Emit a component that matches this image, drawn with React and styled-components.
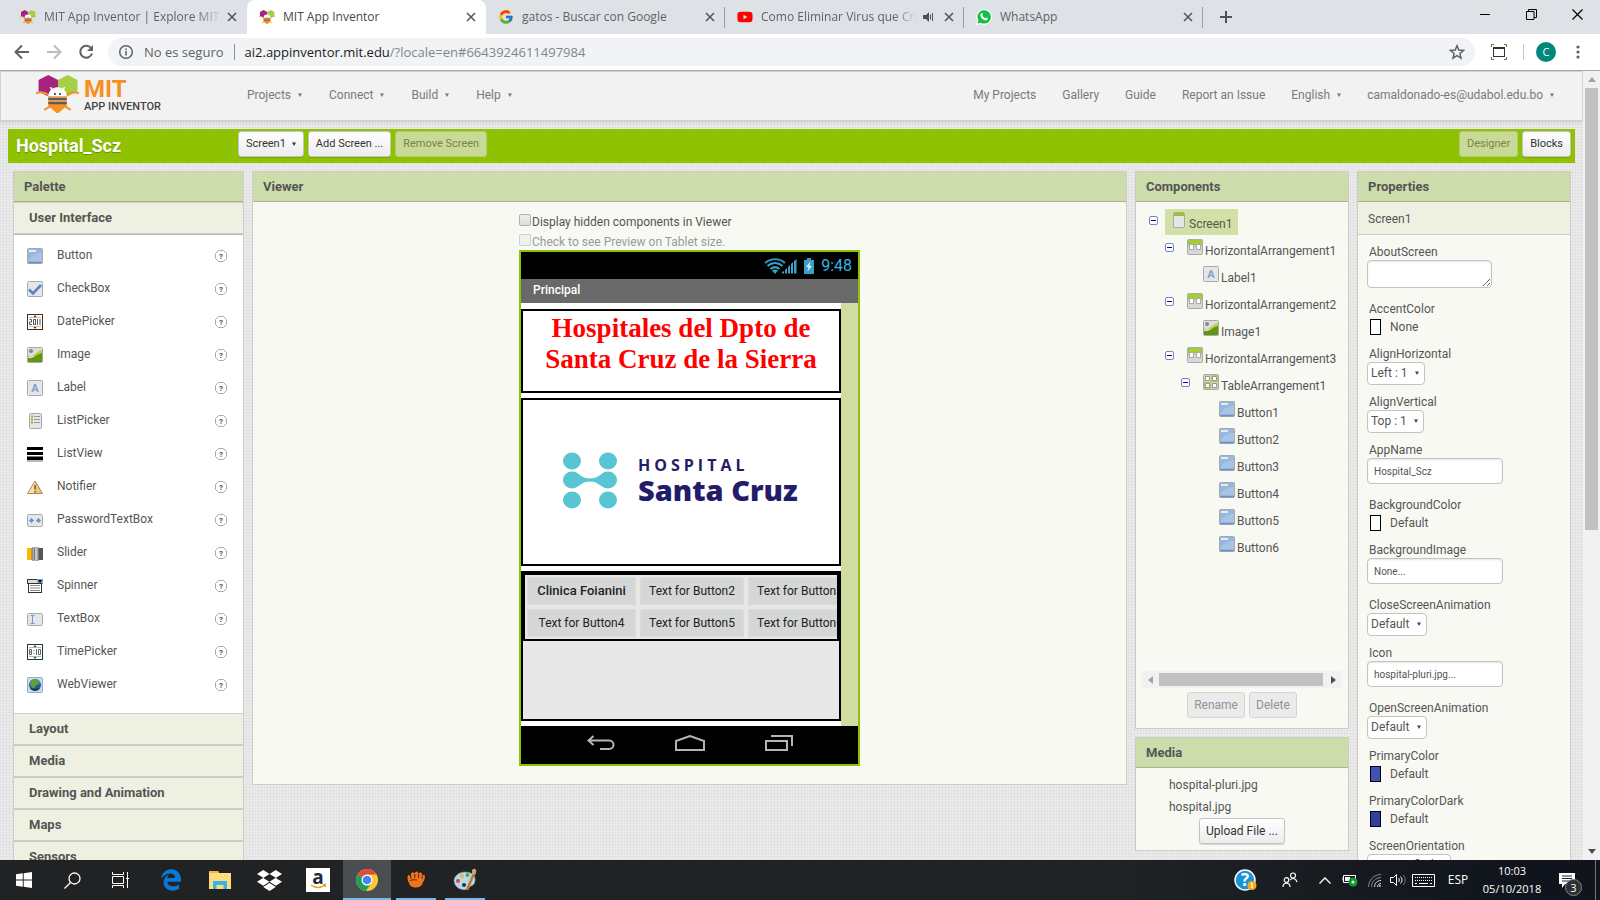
import React from "react";
import styled, { createGlobalStyle, css } from "styled-components";
import { FaDropbox, FaEdgeLegacy, FaYoutube } from "react-icons/fa";
import { FcGoogle } from "react-icons/fc";

const GlobalStyle = createGlobalStyle`
  * { box-sizing: border-box; }
  body { margin: 0; font-family: Roboto, "Liberation Sans", sans-serif; font-size: 12px; line-height: 16px; color: #555; }
  button, input, select, textarea { font: inherit; color: inherit; margin: 0; }
  h1, h2, h3, p, ul { margin: 0; padding: 0; }
  ul { list-style: none; }
  a { color: inherit; text-decoration: none; }
  svg { display: block; flex: none; }
`;

const uiFont = css`font-family: "Open Sans", "Noto Sans", sans-serif;`;

const Desktop = styled.div`
  height: 100vh;
  display: flex;
  flex-direction: column;
  overflow: hidden;
`;

const PlainButton = styled.button`
  border: 0;
  padding: 0;
  background: none;
  display: flex;
  align-items: center;
  justify-content: center;
`;

/* ---------- browser ---------- */

const TabStrip = styled.div`
  ${uiFont}
  flex: none;
  height: 34px;
  background: #dee1e6;
  display: flex;
  padding-left: 8px;
`;

const Tab = styled.div`
  flex: 0 1 239px;
  min-width: 0;
  height: 34px;
  display: flex;
  align-items: center;
  padding: 0 9px 0 12px;
  color: ${(p) => (p.$active ? "#45494d" : "#5f6368")};
  background: ${(p) => (p.$active ? "#fff" : "transparent")};
  border-radius: 8px 8px 0 0;
`;

const TabTitle = styled.span`
  flex: 1;
  min-width: 0;
  margin: 0 4px 0 8px;
  white-space: nowrap;
  overflow: hidden;
  ${(p) => p.$fade && css`mask-image: linear-gradient(90deg, #000 85%, transparent);`}
`;

const TabLine = styled.div`
  width: 1px;
  height: 21px;
  margin: 7px 0 0 -1px;
  background: #9a9da1;
`;

const NewTab = styled(PlainButton)`width: 46px; height: 34px;`;
const WindowControls = styled.div`margin-left: auto; display: flex;`;
const WindowButton = styled(PlainButton)`width: 46px; height: 28px;`;

const Toolbar = styled.div`
  ${uiFont}
  flex: none;
  height: 37px;
  background: #fff;
  border-bottom: 1px solid #a9a9a9;
  display: flex;
  align-items: center;
  padding: 0 12px 0 6px;
`;

const NavButton = styled(PlainButton)`width: 32px; height: 28px;`;

const Omnibox = styled.div`
  flex: 1;
  height: 28px;
  margin-left: 6px;
  padding: 0 10px;
  border-radius: 14px;
  background: #f1f3f4;
  display: flex;
  align-items: center;
  gap: 10px;
  font-size: 13px;
  color: #5f6368;
`;

const OmniLine = styled.div`width: 1px; height: 16px; background: #8a8d91;`;
const Address = styled.div`flex: 1; color: #80868b; b { font-weight: 400; color: #202124; }`;

const Extension = styled(PlainButton)`width: 48px; height: 28px;`;
const ToolLine = styled.div`width: 1px; height: 16px; background: #c6c8cb;`;
const Avatar = styled(PlainButton)`
  width: 20px;
  height: 20px;
  margin: 0 12px;
  border-radius: 50%;
  background: #00897b;
  color: #fff;
  font-size: 11px;
`;
const MoreButton = styled(PlainButton)`width: 20px; height: 28px;`;

/* ---------- page frame ---------- */

const Viewport = styled.div`
  flex: 1;
  min-height: 0;
  display: flex;
`;

const Page = styled.div`
  flex: 1;
  min-width: 0;
  overflow: hidden;
  background-color: #ebebeb;
  background-image:
    repeating-linear-gradient(90deg, rgba(0, 0, 0, 0.03) 0 1px, transparent 1px 3px),
    repeating-linear-gradient(0deg, rgba(0, 0, 0, 0.03) 0 1px, transparent 1px 3px);
`;

const ScrollTrack = styled.div`
  flex: none;
  width: 17px;
  background: #f1f1f1;
  display: flex;
  flex-direction: column;
  align-items: center;
  justify-content: space-between;
`;
const ScrollEnd = styled(PlainButton)`width: 17px; height: 17px;`;
const ScrollThumb = styled.div`width: 13px; flex: 0 0 56%; background: #c1c1c1; margin-bottom: auto;`;

const Header = styled.header`
  height: 50px;
  border: 1px solid #d2d2d2;
  background: #f2f2f2;
  box-shadow: 0 1px 4px rgba(0, 0, 0, 0.12);
  display: flex;
  align-items: center;
  color: #7a7a7a;
  padding: 0 28px 0 35px;
`;

const Brand = styled.a`
  width: 211px;
  display: flex;
  gap: 5px;
  padding-bottom: 4px;
`;
const BrandText = styled.span`
  display: flex;
  flex-direction: column;
  padding-top: 3px;
  b { font-size: 24px; line-height: 22px; font-weight: 700; color: #f7901e; }
  span { font-size: 11px; line-height: 14px; font-weight: 500; color: #444; }
`;

const Menu = styled.nav`
  display: flex;
  gap: 27px;
  padding-bottom: 2px;
`;
const MenuRight = styled(Menu)`margin-left: auto; gap: 26px;`;
const MenuButton = styled(PlainButton)`gap: 7px;`;

const ProjectBar = styled.div`
  height: 34px;
  margin: 8px 8px 0;
  padding: 0 4px 6px 8px;
  background: #8fc202;
  display: flex;
  align-items: flex-end;
  gap: 4px;
`;
const ProjectName = styled.h1`
  width: 218px;
  font-size: 18px;
  line-height: 22px;
  font-weight: 700;
  color: #fff;
  text-shadow: 0 1px 1px rgba(0, 0, 0, 0.25);
`;
const Spacer = styled.div`flex: 1;`;

const PushButton = styled.button`
  height: 26px;
  padding: 0 ${(p) => (p.$small ? 7 : 6)}px;
  border: 1px solid #c4c4c4;
  border-radius: 3px;
  background: linear-gradient(#fff, #ececec);
  box-shadow: 0 1px 1px rgba(0, 0, 0, 0.15);
  color: #333;
  font-size: ${(p) => (p.$small ? 11 : 12)}px;
  white-space: nowrap;
  display: flex;
  align-items: center;
  gap: 6px;
  &:disabled {
    background: ${(p) => (p.$onGreen ? "#c9da98" : "#ebebeb")};
    border-color: ${(p) => (p.$onGreen ? "#b5cc74" : "#d5d5d5")};
    color: ${(p) => (p.$onGreen ? "#76854a" : "#929292")};
    box-shadow: none;
  }
`;

const Workspace = styled.main`
  display: flex;
  align-items: flex-start;
  gap: 8px;
  padding: 8px 12px 0 13px;
`;

const Panel = styled.section`
  width: ${(p) => p.$width};
  flex: ${(p) => (p.$grow ? "1 1 0" : "none")};
  min-width: 0;
  border: 1px solid #ccc;
  background: #f8f9f3;
`;
const PanelTitle = styled.h2`
  height: 30px;
  padding: 0 10px;
  border-bottom: 1px solid #aab38f;
  background: #ccdcab;
  font-size: 13px;
  line-height: 30px;
  font-weight: 700;
  color: #555;
`;

/* ---------- palette ---------- */

const Category = styled.button`
  display: block;
  width: 100%;
  height: 32px;
  padding: 0 15px;
  border: 1px solid #ccc;
  border-width: 1px 0;
  background: #eef1e1;
  text-align: left;
  font-size: 13px;
  font-weight: 700;
  color: #555;
`;
const PaletteList = styled.ul`
  height: 479px;
  padding: 4px 16px 10px 13px;
  border-top: 1px solid #b9b9b9;
  background: #fff;
`;
const PaletteItem = styled.li`
  height: 33px;
  display: flex;
  align-items: center;
  gap: 14px;
  span { flex: 1; padding-bottom: 2px; }
`;

/* ---------- viewer ---------- */

const ViewerBody = styled.div`
  height: 582px;
  padding-top: 12px;
  display: flex;
  flex-direction: column;
  align-items: center;
`;
const PhoneColumn = styled.div`width: 341px;`;
const CheckRow = styled.label`
  height: 20px;
  display: flex;
  align-items: flex-start;
  color: ${(p) => (p.$off ? "#999" : "#555")};
`;
const CheckInput = styled.input`
  appearance: none;
  width: 12px;
  height: 12px;
  border: 1px solid #b0b0b0;
  border-radius: 2px;
  background: linear-gradient(#eee, #ddd);
  &:disabled { border-color: #d0d0d0; background: #f0f0f0; }
`;
const CheckText = styled.span`padding-left: 1px;`;

const Phone = styled.div`
  border: 2px solid #8fc202;
  background: #d0dda2;
  margin-top: -4px;
`;
const PhoneStatus = styled.div`
  height: 27px;
  padding-right: 6px;
  background: #000;
  color: #33b5e5;
  font-size: 16px;
  display: flex;
  align-items: center;
  justify-content: flex-end;
  gap: 6px;
`;
const PhoneTitle = styled.div`
  height: 24px;
  padding: 0 12px;
  background: #696969;
  color: #fff;
  font-weight: 500;
  line-height: 22px;
`;
const PhoneForm = styled.div`
  width: 320px;
  height: 423px;
  padding: 6px 0 5px;
  background: #fff;
  display: flex;
  flex-direction: column;
  gap: 5px;
`;
const Arrangement = styled.div`
  height: ${(p) => p.$height}px;
  border: 2px solid #000;
  background: ${(p) => (p.$gray ? "#e7e7e7" : "#fff")};
  overflow: hidden;
`;
const BigLabel = styled.p`
  padding-top: 2px;
  text-align: center;
  font-family: "Liberation Serif", serif;
  font-size: 27px;
  line-height: 31px;
  font-weight: 700;
  color: #f00;
`;
const HospitalLogo = styled.div`
  height: 100%;
  padding: 0 0 2px 39px;
  display: flex;
  align-items: center;
  gap: 20px;
  font-family: "Open Sans", "Noto Sans", sans-serif;
  color: #231c68;
`;
const LogoWords = styled.div`display: flex; flex-direction: column;`;
const LogoSmall = styled.span`
  font-size: 16px;
  line-height: 18px;
  font-weight: 700;
  letter-spacing: 4px;
`;
const LogoLarge = styled.span`font-size: 29px; line-height: 32px; font-weight: 800; white-space: nowrap;`;

const TableArrangement = styled.div`
  height: 68px;
  padding: 2px;
  border: 2px solid #000;
  overflow: hidden;
  display: grid;
  grid-template-columns: 109px 104px 104px;
  gap: 4px;
`;
const AppButton = styled.button`
  height: 28px;
  padding: 0;
  border: 1px solid #dcdcdc;
  background: #d5d6d6;
  color: #222;
  font-size: ${(p) => (p.$bold ? 13 : 12)}px;
  font-weight: ${(p) => (p.$bold ? 500 : 400)};
  white-space: nowrap;
`;
const PhoneNav = styled.div`
  height: 38px;
  background: #000;
  display: flex;
  justify-content: center;
  align-items: center;
  gap: 60px;
  padding-bottom: 4px;
`;

/* ---------- components tree ---------- */

const Side = styled.div`width: 214px; display: flex; flex-direction: column; gap: 8px;`;
const Tree = styled.ul`height: 469px; padding: 7px 0 0 13px; overflow: hidden;`;
const TreeRow = styled.li`
  height: 27px;
  display: flex;
  padding-left: ${(p) => p.$level * 16}px;
`;
const Toggle = styled(PlainButton)`width: 16px; height: 16px; justify-content: flex-start; align-items: flex-end;`;
const TreeNode = styled.span`
  height: 26px;
  display: flex;
  gap: 2px;
  padding: 3px 6px 0;
  white-space: nowrap;
  background: ${(p) => (p.$selected ? "#d2e0a6" : "none")};
  b { font-weight: 400; line-height: 24px; }
`;
const HScroll = styled.div`
  height: 17px;
  margin: 0 6px;
  background: #f1f1f1;
  display: flex;
  align-items: center;
`;
const HThumb = styled.div`width: 82%; height: 13px; background: #c1c1c1;`;
const ButtonRow = styled.div`
  display: flex;
  justify-content: center;
  gap: 4px;
  padding: ${(p) => p.$pad};
`;
const MediaItem = styled.a`display: block; padding: 3px 33px; line-height: 16px;`;
const MediaList = styled.div`padding-top: 6px;`;

/* ---------- properties ---------- */

const Target = styled.p`
  height: 33px;
  padding: 0 10px;
  border-bottom: 1px solid #ccc;
  background: #eef1e1;
  line-height: 34px;
`;
const PropertyList = styled.div`padding: 9px 9px 20px;`;
const Property = styled.div`margin-bottom: ${(p) => (p.$wide ? 13 : 9)}px;`;
const PropertyName = styled.label`display: block; padding-left: 2px;`;
const fieldBox = css`
  display: block;
  border: 1px solid #c3c3c3;
  border-radius: 4px;
  background: #fff;
  outline: 0;
`;
const TextField = styled.input`
  ${fieldBox}
  width: 136px;
  height: 26px;
  padding: 0 6px;
  font-size: 10px;
  box-shadow: inset 0 1px 2px rgba(0, 0, 0, 0.1);
`;
const TextArea = styled.textarea`
  ${fieldBox}
  width: 125px;
  height: 28px;
  resize: both;
  box-shadow: inset 0 1px 2px rgba(0, 0, 0, 0.1);
`;
const SelectWrap = styled.div`
  width: max-content;
  position: relative;
  svg { position: absolute; right: 6px; top: 9px; pointer-events: none; }
`;
const Select = styled.select`
  ${fieldBox}
  appearance: none;
  height: 23px;
  padding: 0 16px 2px 3px;
`;
const ColorRow = styled.button`
  height: 20px;
  padding: 0 0 0 3px;
  border: 0;
  background: none;
  display: flex;
  align-items: center;
  gap: 9px;
`;
const Swatch = styled.span`
  width: 11px;
  height: 16px;
  border: 1px solid #000;
  background: ${(p) => p.$color};
`;

/* ---------- taskbar ---------- */

const Taskbar = styled.footer`
  ${uiFont}
  flex: none;
  height: 40px;
  background: linear-gradient(90deg, #202224 70%, #10151d 95%);
  color: #fff;
  display: flex;
`;
const TaskButton = styled(PlainButton)`
  width: 48px;
  height: 40px;
  margin-right: ${(p) => (p.$app ? 1 : 0)}px;
  background: ${(p) => (p.$active ? "#4b4e50" : "none")};
  position: relative;
  &::after {
    content: "";
    position: absolute;
    bottom: 0;
    left: ${(p) => (p.$active ? 0 : 4)}px;
    right: ${(p) => (p.$active ? 0 : 4)}px;
    height: 2px;
    background: ${(p) => (p.$open ? "#76b9ed" : "transparent")};
  }
`;
const TaskGap = styled.div`width: 3px;`;
const Tray = styled.div`
  margin-left: auto;
  display: flex;
  align-items: center;
`;
const TrayButton = styled(PlainButton)`width: ${(p) => p.$w}px; height: 40px; color: #fff;`;
const Language = styled(PlainButton)`width: 42px; color: #fff;`;
const Clock = styled.div`
  width: 66px;
  text-align: center;
  font-size: 11px;
  line-height: 18px;
`;
const Notify = styled(PlainButton)`
  width: 50px;
  height: 40px;
  padding-right: 6px;
  position: relative;
`;
const Badge = styled.span`
  position: absolute;
  right: 13px;
  bottom: 4px;
  width: 17px;
  height: 17px;
  border: 1px solid #888;
  border-radius: 50%;
  background: #2c2f33;
  color: #fff;
  font-size: 11px;
  line-height: 15px;
`;
const ShowDesktop = styled.div`width: 5px; height: 40px; border-left: 1px solid #777;`;

/* ---------- drawings ---------- */

const Caret = ({ color = "#777" }) => (
  <svg width="4" height="4" viewBox="0 0 4 4"><path d="M0 .5h4L2 4z" fill={color} /></svg>
);

const CloseX = () => (
  <PlainButton aria-label="Close tab">
    <svg width="12" height="12" viewBox="0 0 12 12"><path d="M2 2l8 8M10 2l-8 8" stroke="#4f5357" strokeWidth="1.500" /></svg>
  </PlainButton>
);

const Bee = ({ size = 16 }) => (
  <svg width={size} height={size * 38 / 42} viewBox="0 0 42 38">
    <path d="M2.500 5L12 0l9.500 5v12L12 21l-9.500-5z" fill="#a5237c" />
    <path d="M21.500 5L31 0l9.500 5v11L31 21l-9.500-4z" fill="#a5cf47" />
    <path d="M0 18c4-2 9-1 13 2M42 18c-4-2-9-1-13 2M8 34l7-4M34 34l-7-4" stroke="#f7901e" strokeWidth="2" fill="none" />
    <path d="M12 21c0-12 18-12 18 0z" fill="#fff" />
    <path d="M14 12l3 4M28 12l-3 4" stroke="#fff" strokeWidth="1.500" />
    <circle cx="18.500" cy="18.500" r="1" fill="#222" /><circle cx="23.500" cy="18.500" r="1" fill="#222" />
    <path d="M12 21h18v9l-9 8-9-8z" fill="#f7901e" />
    <path d="M12 23.500h18M12 27.500h18" stroke="#5b5b5d" strokeWidth="2" />
    <path d="M12 21.500h18M12 25.500h18" stroke="#cf9f7a" strokeWidth="1" />
  </svg>
);

const WhatsAppMark = () => (
  <svg width="16" height="16" viewBox="0 0 16 16">
    <path d="M0 16l1.200-4.200A7.800 7.800 0 1 1 4.400 15z" fill="#fff" />
    <path d="M1.500 14.500l.9-3.200A6.700 6.700 0 1 1 4.800 13.700z" fill="#12c143" />
    <path d="M5.300 4.300c.7-.6 1.200-.2 1.400.5.300.8.400 1-.3 1.800.6 1.200 1.500 2.100 2.800 2.700.7-.9.900-1 1.600-.6 1 .5 1.300.7 1 1.400-.5 1.400-2 1.600-3.500 1C6 10.200 4.700 8.500 4.400 6.800c-.1-1 .2-2 .9-2.500z" fill="#fff" />
  </svg>
);

const HelpMark = () => (
  <PlainButton aria-label="Help">
    <svg width="12" height="12" viewBox="0 0 12 12">
      <path d="M3.500 .5h5l3 3v5l-3 3h-5l-3-3v-5z" fill="#fff" stroke="#aaa" />
      <text x="6" y="9" fontSize="8" fontWeight="700" textAnchor="middle" fill="#555" fontFamily="Roboto">?</text>
    </svg>
  </PlainButton>
);

const Frame = ({ fill = "#e4e6e8", y = 0.5, h = 15, x = 0.5, w = 15, stroke = "#a9a9a9" }) => (
  <rect x={x} y={y} width={w} height={h} rx="1" fill={fill} stroke={stroke} />
);

const drawings = {
  Button: <><Frame fill="#a9c3e5" /><path d="M1 1h14v4C9 5 4 8 1 13z" fill="#98b7df" /><path d="M2 2h7v2H2z" fill="#e3edf9" /><path d="M1 14.500h14" stroke="#6b8fc7" strokeWidth="1.500" /></>,
  CheckBox: <><Frame /><path d="M2 8.500l4 4L14 4" fill="none" stroke="#5583c9" strokeWidth="2.600" /></>,
  DatePicker: <><rect x=".5" y=".5" width="15" height="15" fill="#fff" stroke="#333" /><path d="M2 3.500h12M2 12.500h12" stroke="#f0b27a" /><path d="M6.500 3L8 1l1.500 2zM6.500 13L8 15l1.500-2z" fill="#333" /><path d="M2.500 5.500h2v2.500h-2v2.500h2.500M6.500 5.500h2v5h-2zM10.500 5v6M13 5v6" fill="none" stroke="#555" /></>,
  Image: <><Frame fill="#ddd" /><circle cx="4" cy="4" r="2" fill="#888" /><path d="M1 10c6 0 8-6 14-7v6H1z" fill="#b3d447" /><path d="M1 11c6 1 8-4 14-5v9H1z" fill="#65960f" /></>,
  Label: <><Frame /><text x="8" y="12" fontSize="11" fontWeight="700" textAnchor="middle" fill="#7da0d6" fontFamily="Roboto">A</text></>,
  ListPicker: <><Frame x={2.5} w={12} /><path d="M4 3.500h2M4 6.500h2M4 9.500h2" stroke="#8db53a" strokeWidth="2" /><path d="M7 3.500h6M7 6.500h6M7 9.500h6" stroke="#999" /></>,
  ListView: <><path d="M0 2.500h16M0 7.500h16M0 12.500h16" stroke="#000" strokeWidth="3" /><path d="M0 10.500h16M0 15h16" stroke="#777" strokeWidth="1" /></>,
  Notifier: <><path d="M8 2l7.500 12.500H.5z" fill="#f5c368" stroke="#9a8b70" /><path d="M8 3v11H1.500z" fill="#fbe0a4" /><path d="M8 6v4.500M8 12v1.500" stroke="#765220" strokeWidth="1.500" /></>,
  PasswordTextBox: <><Frame y={2.5} h={12} /><path d="M4.500 6v5M2 8.500h5M3 7l3 3M6 7l-3 3M11.500 6v5M9 8.500h5M10 7l3 3M13 7l-3 3" stroke="#6e96d4" /></>,
  Slider: <><rect y="3" width="5" height="12" fill="#fab900" /><rect x="5" y="2" width="7" height="14" fill="#aaa" /><path d="M5 3v12M7.500 3v12M11.500 3v12" stroke="#777" /><path d="M9 3v12" stroke="#ddd" /><rect x="12" y="3" width="4" height="12" fill="#555" /></>,
  Spinner: <><rect x=".5" y="1.500" width="15" height="4" fill="#ddd" stroke="#334" /><rect x="10" y="1" width="6" height="5" fill="#7ea2d9" /><path d="M11 2h4l-2 3z" fill="#000" /><rect x="1.500" y="5.500" width="13" height="9" fill="#fff" stroke="#333" /><path d="M3 7.500h10M3 10h10M3 12.500h10" stroke="#888" /></>,
  TextBox: <><Frame y={2.5} h={12} /><path d="M3.500 4.500h4M3.500 12.500h4M5.500 4.500v8" stroke="#7c99c9" /></>,
  TimePicker: <><rect x=".5" y=".5" width="15" height="15" fill="#fff" stroke="#333" /><path d="M2 3.500h12M2 12.500h12" stroke="#8ec3dc" /><path d="M6.500 3L8 1l1.500 2zM6.500 13L8 15l1.500-2z" fill="#333" /><path d="M2.500 5.500h2v5h-2zM2.500 8h2M9.500 5v6M11.500 5.500h2v5h-2zM7 6v1M7 9v1" fill="none" stroke="#666" /></>,
  WebViewer: <><Frame fill="#c6daf3" stroke="#91abd2" /><circle cx="8" cy="8" r="6" fill="#265a9c" /><path d="M3 6c2-5 8-5 10-1-1 4-4 2-5 5s-5 0-5-4z" fill="#58a23c" /><path d="M3 11c3 4 8 3 10 0-3 1-7 1-10 0z" fill="#173a30" /></>,
  Screen: <><Frame x={2.5} w={11} /><rect x="3" y="1" width="10" height="3" fill="#9cc22e" /></>,
  Horizontal: <><Frame fill="#d8d8d8" /><rect x="1" y="1" width="14" height="5" fill="#a6cc3c" /><path d="M1 6h14v2H1z" fill="#c0d884" /><rect x="2.500" y="5.500" width="4" height="5" fill="#fff" stroke="#aaa" /><rect x="9.500" y="5.500" width="4" height="5" fill="#fff" stroke="#aaa" /></>,
  Table: <><Frame fill="#b0cd62" /><path d="M1 1h7v7H1zM8 8h7v7H8z" fill="#ccd2bd" /><path d="M2.500 2.500h4v4h-4zM9.500 2.500h4v4h-4zM2.500 9.500h4v4h-4zM9.500 9.500h4v4h-4z" fill="#fff" stroke="#999" /></>,
};

const Glyph = ({ name }) => <svg width="16" height="16" viewBox="0 0 16 16">{drawings[name]}</svg>;

const Minus = () => (
  <svg width="9" height="9" viewBox="0 0 9 9"><rect x=".5" y=".5" width="8" height="8" rx="1.500" fill="#fff" stroke="#7686c2" /><path d="M2 4.500h5" stroke="#0000b0" /></svg>
);

const HospitalMark = () => (
  <svg width="56" height="58" viewBox="0 0 56 58" fill="#57c5d2">
    {[10, 46].map((x) => [9, 28, 48].map((y) => <ellipse key={`${x}-${y}`} cx={x} cy={y} rx="9" ry="8.500" />))}
    <path d="M13 20c6 3 8 6.500 15 6.500S37 23 43 20v16c-6-3-8-6.500-15-6.500S19 33 13 36z" />
  </svg>
);

const ChromeLogo = () => (
  <svg width="24" height="24" viewBox="0 0 24 24">
    <circle cx="12" cy="12" r="11" fill="#fbc933" />
    <path d="M12 12L2.500 6.500A11 11 0 0 1 21.500 6.500H12z" fill="#dd4b3e" />
    <path d="M12 12L2.500 6.500A11 11 0 0 0 11 23l5.500-8.500z" fill="#1fa05a" />
    <circle cx="12" cy="12" r="5.500" fill="#fff" /><circle cx="12" cy="12" r="4.300" fill="#4285f4" />
  </svg>
);

/* ---------- data ---------- */

const tabs = [
  { title: "MIT App Inventor | Explore MIT App Inventor", icon: <Bee />, fade: true },
  { title: "MIT App Inventor", icon: <Bee />, active: true },
  { title: "gatos - Buscar con Google", icon: <FcGoogle size={16} />, line: true },
  { title: "Como Eliminar Virus que Crean Acceso", icon: <FaYoutube size={16} color="#f00" />, line: true, fade: true, sound: true },
  { title: "WhatsApp", icon: <WhatsAppMark />, line: true },
];

const paletteItems = ["Button", "CheckBox", "DatePicker", "Image", "Label", "ListPicker", "ListView", "Notifier", "PasswordTextBox", "Slider", "Spinner", "TextBox", "TimePicker", "WebViewer"];
const categories = ["Layout", "Media", "Drawing and Animation", "Maps", "Sensors"];

const tree = [
  [0, "Screen", "Screen1", true],
  [1, "Horizontal", "HorizontalArrangement1", true],
  [2, "Label", "Label1"],
  [1, "Horizontal", "HorizontalArrangement2", true],
  [2, "Image", "Image1"],
  [1, "Horizontal", "HorizontalArrangement3", true],
  [2, "Table", "TableArrangement1", true],
  ...[1, 2, 3, 4, 5, 6].map((n) => [3, "Button", `Button${n}`]),
];

const properties = [
  ["AboutScreen", "area", ""],
  ["AccentColor", "color", "None", "#fff"],
  ["AlignHorizontal", "select", "Left : 1"],
  ["AlignVertical", "select", "Top : 1"],
  ["AppName", "text", "Hospital_Scz"],
  ["BackgroundColor", "color", "Default", "#fff"],
  ["BackgroundImage", "text", "None..."],
  ["CloseScreenAnimation", "select", "Default"],
  ["Icon", "text", "hospital-pluri.jpg..."],
  ["OpenScreenAnimation", "select", "Default"],
  ["PrimaryColor", "color", "Default", "#3f51b5"],
  ["PrimaryColorDark", "color", "Default", "#303f9f"],
  ["ScreenOrientation", "select", "Unspecified"],
];

const PropertyControl = ({ id, kind, value, color }) => {
  if (kind === "area") return <TextArea id={id} defaultValue={value} />;
  if (kind === "text") return <TextField id={id} defaultValue={value} />;
  if (kind === "color") return <ColorRow id={id}><Swatch $color={color} />{value}</ColorRow>;
  return (
    <SelectWrap>
      <Select id={id}><option>{value}</option></Select>
      <Caret color="#444" />
    </SelectWrap>
  );
};

/* ---------- sections ---------- */

const Browser = () => (
  <>
    <TabStrip>
      {tabs.map((t) => (
        <React.Fragment key={t.title}>
          <Tab $active={t.active}>
            {t.icon}
            <TabTitle $fade={t.fade}>{t.title}</TabTitle>
            {t.sound && (
              <svg width="22" height="12" viewBox="0 0 22 12"><path d="M2 4h3l3-3v10L5 8H2z" fill="#4f5357" /><path d="M9.500 3.500v5M11.500 2v8" stroke="#4f5357" /></svg>
            )}
            <CloseX />
          </Tab>
          {t.line && <TabLine />}
        </React.Fragment>
      ))}
      <NewTab aria-label="New tab"><svg width="12" height="12" viewBox="0 0 12 12"><path d="M6 0v12M0 6h12" stroke="#4f5357" strokeWidth="2" /></svg></NewTab>
      <WindowControls>
        <WindowButton aria-label="Minimize"><svg width="10" height="10" viewBox="0 0 10 10"><path d="M0 5.500h10" stroke="#000" /></svg></WindowButton>
        <WindowButton aria-label="Restore"><svg width="11" height="11" viewBox="0 0 11 11"><path d="M.5 2.500h7.500v8H.5zM2.500 2V.5h8v8H8" fill="none" stroke="#000" /></svg></WindowButton>
        <WindowButton aria-label="Close"><svg width="11" height="11" viewBox="0 0 11 11"><path d="M.5 .5l10 10M10.500 .5l-10 10" stroke="#000" strokeWidth="1.200" /></svg></WindowButton>
      </WindowControls>
    </TabStrip>
    <Toolbar>
      <NavButton aria-label="Back"><svg width="16" height="16" viewBox="0 0 16 16"><path d="M15 8H2M8 1.500L1.500 8 8 14.500" fill="none" stroke="#5f6368" strokeWidth="2" /></svg></NavButton>
      <NavButton aria-label="Forward"><svg width="16" height="16" viewBox="0 0 16 16"><path d="M1 8h13M8 1.500L14.500 8 8 14.500" fill="none" stroke="#babcbe" strokeWidth="2" /></svg></NavButton>
      <NavButton aria-label="Reload"><svg width="16" height="16" viewBox="0 0 16 16"><path d="M13 4A6 6 0 1 0 14 9.500" fill="none" stroke="#5f6368" strokeWidth="2" /><path d="M15 1v6H9z" fill="#5f6368" /></svg></NavButton>
      <Omnibox>
        <svg width="16" height="16" viewBox="0 0 16 16"><circle cx="8" cy="8" r="6.300" fill="none" stroke="#5f6368" strokeWidth="1.500" /><path d="M8 7v4.500M8 4.500V6" stroke="#5f6368" strokeWidth="1.600" /></svg>
        <span>No es seguro</span>
        <OmniLine />
        <Address><b>ai2.appinventor.mit.edu</b>/?locale=en#6643924611497984</Address>
        <svg width="16" height="16" viewBox="0 0 16 16"><path d="M8 1.800l1.800 4.300 4.700.4-3.600 3 1.100 4.600L8 11.700l-4 2.400 1.100-4.600-3.600-3 4.700-.4z" fill="none" stroke="#5f6368" strokeWidth="1.500" /></svg>
      </Omnibox>
      <Extension aria-label="Capture"><svg width="16" height="16" viewBox="0 0 16 16"><rect x="2.500" y="3.500" width="11" height="9" fill="#fff" stroke="#333" /><path d="M2 4h12" stroke="#333" strokeWidth="2" /><path d="M.5 3V.5H3M13 .5h2.500V3M.5 13v2.500H3M13 15.500h2.500V13" fill="none" stroke="#2e8b2e" /></svg></Extension>
      <ToolLine />
      <Avatar>C</Avatar>
      <MoreButton aria-label="Menu"><svg width="4" height="14" viewBox="0 0 4 14" fill="#5f6368"><circle cx="2" cy="2" r="1.600" /><circle cx="2" cy="7" r="1.600" /><circle cx="2" cy="12" r="1.600" /></svg></MoreButton>
    </Toolbar>
  </>
);

const PageHeader = () => (
  <Header>
    <Brand href="#home">
      <Bee size={43} />
      <BrandText><b>MIT</b><span>APP INVENTOR</span></BrandText>
    </Brand>
    <Menu>
      {["Projects", "Connect", "Build", "Help"].map((m) => <MenuButton key={m}>{m}<Caret /></MenuButton>)}
    </Menu>
    <MenuRight>
      {["My Projects", "Gallery", "Guide", "Report an Issue"].map((m) => <a key={m} href="#link">{m}</a>)}
      <MenuButton>English<Caret /></MenuButton>
      <MenuButton>camaldonado-es@udabol.edu.bo<Caret /></MenuButton>
    </MenuRight>
  </Header>
);

const PalettePanel = () => (
  <Panel $width="231px">
    <PanelTitle>Palette</PanelTitle>
    <Category>User Interface</Category>
    <PaletteList>
      {paletteItems.map((n) => <PaletteItem key={n}><Glyph name={n} /><span>{n}</span><HelpMark /></PaletteItem>)}
    </PaletteList>
    {categories.map((c) => <Category key={c}>{c}</Category>)}
  </Panel>
);

const PhonePreview = () => (
  <Phone>
    <PhoneStatus>
      <svg width="52" height="18" viewBox="0 0 52 18" fill="#3a9fc9">
        <path d="M2 6C8 1 16 1 22 6" fill="none" stroke="#2f93bd" strokeWidth="2.200" />
        <path d="M4.500 9c4.500-4 10.500-4 15 0M7.500 12c3-2.500 6-2.500 9 0" fill="none" stroke="#3a9fc9" strokeWidth="2.200" />
        <path d="M9 13.500c2-1.500 4-1.500 6 0L12 17z" />
        <path d="M19 16.500h2v-2.500l-2 1zM22 16.500h2V11l-2 2zM25 16.500h2V8l-2 2zM28 16.500h2V5l-2 2zM31 16.500h2.500V2L31 4z" />
        <path d="M41 3h3V1h4v2h3v14H41z" /><path d="M47.500 4.500L43 10h2.500L44.500 14.500 49 9h-2.500z" fill="#dff3fb" />
      </svg>
      9:48
    </PhoneStatus>
    <PhoneTitle>Principal</PhoneTitle>
    <PhoneForm>
      <Arrangement $height={84}><BigLabel>Hospitales del Dpto de<br />Santa Cruz de la Sierra</BigLabel></Arrangement>
      <Arrangement $height={168}>
        <HospitalLogo>
          <HospitalMark />
          <LogoWords><LogoSmall>HOSPITAL</LogoSmall><LogoLarge>Santa Cruz</LogoLarge></LogoWords>
        </HospitalLogo>
      </Arrangement>
      <Arrangement $height={150} $gray>
        <TableArrangement>
          <AppButton $bold>Clinica Foianini</AppButton>
          {[2, 3, 4, 5, 6].map((n) => <AppButton key={n}>Text for Button{n}</AppButton>)}
        </TableArrangement>
      </Arrangement>
    </PhoneForm>
    <PhoneNav>
      <svg width="28" height="16" viewBox="0 0 28 16" fill="none" stroke="#b5b5b5" strokeWidth="2"><path d="M6.500 1L1.500 5.500l5 4.500M2 5.500h20c6 0 6 8.500 0 8.500h-9" /></svg>
      <svg width="30" height="16" viewBox="0 0 30 16" fill="none" stroke="#b5b5b5" strokeWidth="2"><path d="M1 15V6l14-5 14 5v9z" /></svg>
      <svg width="28" height="16" viewBox="0 0 28 16" fill="none" stroke="#b5b5b5" strokeWidth="2"><path d="M1 6h21v9H1zM6 1h21v10" /></svg>
    </PhoneNav>
  </Phone>
);

const ViewerPanel = () => (
  <Panel $grow>
    <PanelTitle>Viewer</PanelTitle>
    <ViewerBody>
      <PhoneColumn>
        <CheckRow><CheckInput type="checkbox" /><CheckText>Display hidden components in Viewer</CheckText></CheckRow>
        <CheckRow $off><CheckInput type="checkbox" disabled /><CheckText>Check to see Preview on Tablet size.</CheckText></CheckRow>
        <PhonePreview />
      </PhoneColumn>
    </ViewerBody>
  </Panel>
);

const ComponentsPanel = () => (
  <Panel>
    <PanelTitle>Components</PanelTitle>
    <Tree>
      {tree.map(([level, icon, name, open]) => (
        <TreeRow key={name} $level={level}>
          <Toggle aria-label={`Toggle ${name}`}>{open && <Minus />}</Toggle>
          <TreeNode $selected={level === 0}><Glyph name={icon} /><b>{name}</b></TreeNode>
        </TreeRow>
      ))}
    </Tree>
    <HScroll>
      <ScrollEnd aria-label="Scroll left"><svg width="5" height="8" viewBox="0 0 5 8"><path d="M5 0v8L0 4z" fill="#a3a3a3" /></svg></ScrollEnd>
      <HThumb />
      <Spacer />
      <ScrollEnd aria-label="Scroll right"><svg width="5" height="8" viewBox="0 0 5 8"><path d="M0 0v8l5-4z" fill="#505050" /></svg></ScrollEnd>
    </HScroll>
    <ButtonRow $pad="4px 0 10px"><PushButton disabled>Rename</PushButton><PushButton disabled>Delete</PushButton></ButtonRow>
  </Panel>
);

const MediaPanel = () => (
  <Panel>
    <PanelTitle>Media</PanelTitle>
    <MediaList>
      <MediaItem href="#pluri">hospital-pluri.jpg</MediaItem>
      <MediaItem href="#hospital">hospital.jpg</MediaItem>
    </MediaList>
    <ButtonRow $pad="0 0 6px"><PushButton>Upload File ...</PushButton></ButtonRow>
  </Panel>
);

const PropertiesPanel = () => (
  <Panel $width="214px">
    <PanelTitle>Properties</PanelTitle>
    <Target>Screen1</Target>
    <PropertyList>
      {properties.map(([name, kind, value, color]) => (
        <Property key={name} $wide={kind === "text" || kind === "area"}>
          <PropertyName htmlFor={name}>{name}</PropertyName>
          <PropertyControl id={name} kind={kind} value={value} color={color} />
        </Property>
      ))}
    </PropertyList>
  </Panel>
);

const WindowsTaskbar = () => (
  <Taskbar>
    <TaskButton aria-label="Start"><svg width="16" height="16" viewBox="0 0 16 16" fill="#fff"><path d="M0 2.300L6.800 1.300v6.200H0zM7.700 1.200L16 0v7.500H7.700zM0 8.400h6.800v6.300L0 13.700zM7.700 8.400H16V16l-8.300-1.200z" /></svg></TaskButton>
    <TaskButton aria-label="Search"><svg width="17" height="17" viewBox="0 0 17 17" fill="none" stroke="#fff" strokeWidth="1.300"><circle cx="10.500" cy="6.500" r="5.500" /><path d="M6.500 10.500L.5 16.500" /></svg></TaskButton>
    <TaskButton aria-label="Task view"><svg width="17" height="16" viewBox="0 0 17 16" fill="none" stroke="#fff"><path d="M.5 0v2.500h11V0M.5 4.500h11v7H.5zM.5 16v-2.500h11V16M15.500 0v16M14 6.500h3" /></svg></TaskButton>
    <TaskGap />
    <TaskButton $app aria-label="Edge"><FaEdgeLegacy size={22} color="#0a78d7" /></TaskButton>
    <TaskButton $app aria-label="Files"><svg width="22" height="20" viewBox="0 0 22 20"><path d="M0 1h9l1 2h12v16H0z" fill="#fbdc81" /><path d="M0 1h9l1 2H1z" fill="#eeb53a" /><path d="M4 19v-8h14v8h-3.500v-4h-7v4z" fill="#38b4ea" /></svg></TaskButton>
    <TaskButton $app aria-label="Dropbox"><FaDropbox size={25} color="#fff" /></TaskButton>
    <TaskButton $app aria-label="Amazon"><svg width="24" height="24" viewBox="0 0 24 24"><rect width="24" height="24" fill="#fff" /><text x="12" y="16" textAnchor="middle" fontSize="19" fontWeight="700" fontFamily="Open Sans" fill="#222b38">a</text><path d="M5 17c5 3.500 10 3 14 0M17 16.500h2.500l-.5 2.500" fill="none" stroke="#f8991d" strokeWidth="1.500" /></svg></TaskButton>
    <TaskButton $app $active $open aria-label="Chrome"><ChromeLogo /></TaskButton>
    <TaskButton $app $open aria-label="Fist"><svg width="22" height="20" viewBox="0 0 22 20"><path d="M2 7c0-3 3-3 3.500-1C5 1 9 1 9.500 3c1-3 4-2 4 0 2-2 4-1 4 2 2-1 3 0 3 2-.5 3-1 4-2 5-1 8-14 8-15 1C2 11 2 9 2 7z" fill="#ee7423" stroke="#2b1206" strokeWidth="1" /><path d="M5.800 6v3M9.800 4v4M13.500 4v4M17 6v3M5 11c2-2 5-1 7-1" stroke="#5b2408" fill="none" /></svg></TaskButton>
    <TaskButton $app $open aria-label="Paint"><svg width="24" height="24" viewBox="0 0 24 24"><path d="M1 13C1 8 6 4 12 4s11 3 10 9-5 4-6 7-14 3-15-7z" fill="#b8d9ec" stroke="#6b98b5" strokeWidth=".6" /><circle cx="5" cy="13" r="2" fill="#d8483c" /><circle cx="9" cy="8" r="2" fill="#f1b42d" /><circle cx="14.500" cy="7" r="2" fill="#52a744" /><circle cx="11" cy="17" r="2" fill="#26333d" /><path d="M22 3l-8 19" stroke="#c87522" strokeWidth="2.500" /><path d="M19 2c3-3 6 0 3 5l-3-1z" fill="#c9a27b" /></svg></TaskButton>
    <Tray>
      <TrayButton $w={44} aria-label="Support"><svg width="24" height="22" viewBox="0 0 24 22"><circle cx="11" cy="11" r="10" fill="#1a94d6" stroke="#fff" strokeWidth="1.500" /><text x="11" y="17" fontSize="17" fontWeight="700" textAnchor="middle" fill="#fff" fontFamily="Open Sans">?</text><circle cx="18" cy="16.500" r="4.500" fill="#f4ae1d" /><path d="M18 14v5" stroke="#fff" strokeWidth="1.400" /></svg></TrayButton>
      <TrayButton $w={44} aria-label="People"><svg width="16" height="16" viewBox="0 0 16 16" fill="none" stroke="#fff" strokeWidth="1.200"><circle cx="11" cy="3.500" r="2.500" /><circle cx="4.500" cy="8" r="2.300" /><path d="M1 15c0-5 7-5 7 0M8 8c3-3 6-1 7 2" /></svg></TrayButton>
      <TrayButton $w={26} aria-label="Hidden icons"><svg width="12" height="7" viewBox="0 0 12 7"><path d="M.5 6.500L6 1l5.500 5.500" fill="none" stroke="#fff" strokeWidth="1.300" /></svg></TrayButton>
      <TrayButton $w={24} aria-label="Battery"><svg width="16" height="14" viewBox="0 0 16 14"><path d="M1.500 2.500h12v7h-12zM0 4.500v3" fill="none" stroke="#fff" /><rect x="3" y="4" width="5" height="4" fill="#fff" /><circle cx="11" cy="9" r="4.500" fill="#149a2c" /><circle cx="11" cy="9" r="1.500" fill="#d9ffe0" /></svg></TrayButton>
      <TrayButton $w={24} aria-label="Network"><svg width="13" height="13" viewBox="0 0 13 13" fill="none" stroke="#888"><path d="M.5 13C.5 6 6 .5 13 .5M3.500 13c0-5 4-9.500 9.500-9.500" /><path d="M6.500 13c0-4 3-6.500 6.500-6.500M9.500 13c0-2 1.500-3.500 3.500-3.500" stroke="#ddd" /><circle cx="12" cy="12" r="1" fill="#fff" /></svg></TrayButton>
      <TrayButton $w={24} aria-label="Volume"><svg width="16" height="14" viewBox="0 0 16 14" fill="none" stroke="#fff"><path d="M.5 4.500h3l3-3v11l-3-3h-3zM8.500 5c1 1 1 3 0 4M10.500 3.500c2 2 2 5 0 7" /><path d="M13 2c3 3 3 7 0 10" stroke="#777" /></svg></TrayButton>
      <TrayButton $w={27} aria-label="Keyboard"><svg width="23" height="13" viewBox="0 0 23 13" fill="none" stroke="#fff"><path d="M.5 .5h22v12H.5z" /><path d="M3 3.500h17M3 6.500h17" strokeDasharray="1 1" /><path d="M3 9.500h2M7 9.500h9M18 9.500h2" /></svg></TrayButton>
      <Language>ESP</Language>
      <Clock>10:03<br />05/10/2018</Clock>
      <Notify aria-label="Notifications">
        <svg width="17" height="17" viewBox="0 0 17 17"><path d="M0 1h16v11H6l-3 4v-4H0z" fill="#fff" /><path d="M3 4h10M3 6.500h10M3 9h7" stroke="#222" /></svg>
        <Badge>3</Badge>
      </Notify>
      <ShowDesktop />
    </Tray>
  </Taskbar>
);

export default function App() {
  return (
    <Desktop>
      <GlobalStyle />
      <Browser />
      <Viewport>
        <Page>
          <PageHeader />
          <ProjectBar>
            <ProjectName>Hospital_Scz</ProjectName>
            <PushButton $small>Screen1<Caret color="#333" /></PushButton>
            <PushButton $small>Add Screen ...</PushButton>
            <PushButton $small $onGreen disabled>Remove Screen</PushButton>
            <Spacer />
            <PushButton $small $onGreen disabled>Designer</PushButton>
            <PushButton $small>Blocks</PushButton>
          </ProjectBar>
          <Workspace>
            <PalettePanel />
            <ViewerPanel />
            <Side><ComponentsPanel /><MediaPanel /></Side>
            <PropertiesPanel />
          </Workspace>
        </Page>
        <ScrollTrack>
          <ScrollEnd aria-label="Scroll up"><svg width="8" height="5" viewBox="0 0 8 5"><path d="M0 5h8L4 0z" fill="#a3a3a3" /></svg></ScrollEnd>
          <ScrollThumb />
          <ScrollEnd aria-label="Scroll down"><svg width="8" height="5" viewBox="0 0 8 5"><path d="M0 0h8L4 5z" fill="#505050" /></svg></ScrollEnd>
        </ScrollTrack>
      </Viewport>
      <WindowsTaskbar />
    </Desktop>
  );
}
